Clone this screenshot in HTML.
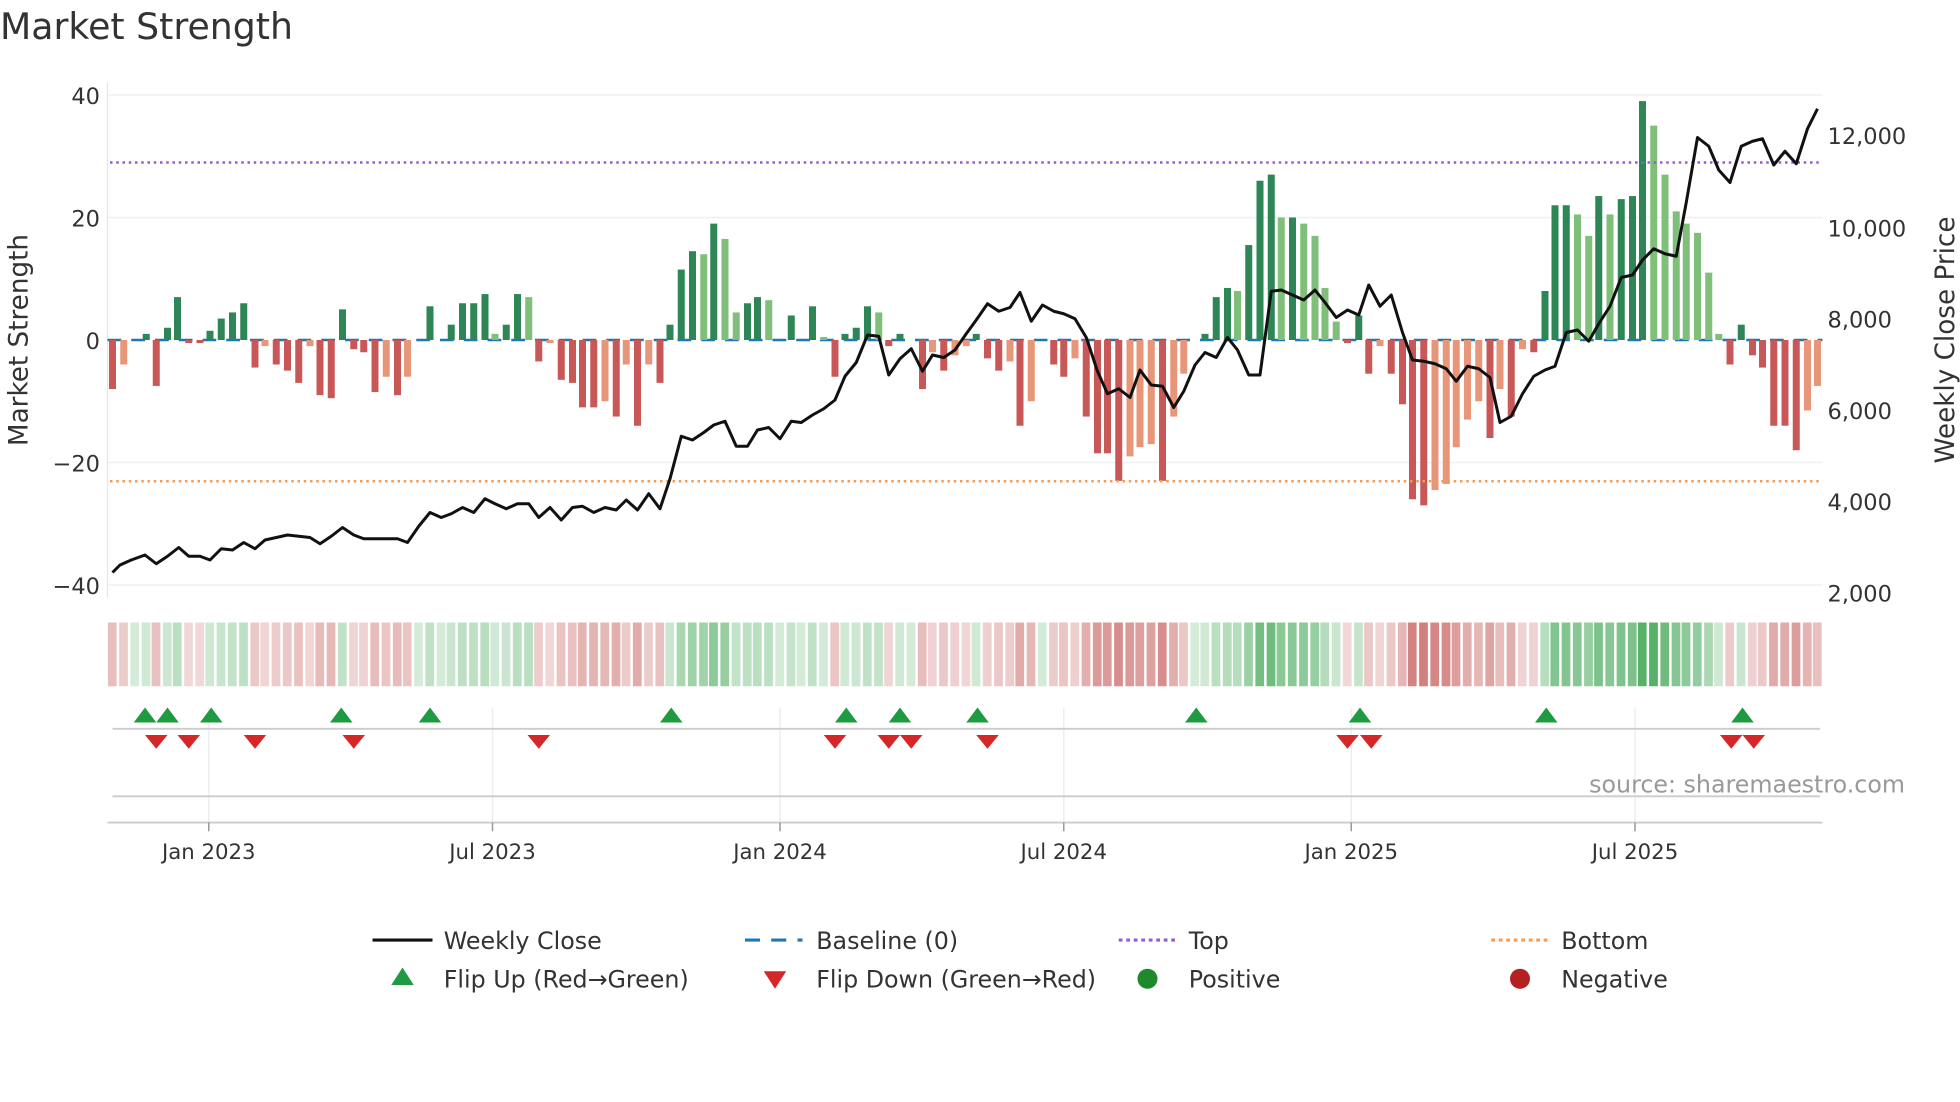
<!DOCTYPE html>
<html><head><meta charset="utf-8">
<style>
html,body{margin:0;padding:0;background:#fff;width:1960px;height:1102px;overflow:hidden}
svg{display:block;font-family:"DejaVu Sans","Liberation Sans",sans-serif}
</style></head><body>
<svg id="c" width="1960" height="1102" viewBox="0 0 1568 881.6" xmlns="http://www.w3.org/2000/svg">
<rect width="1568" height="882" fill="#fff"/>
<text x="0" y="31" font-size="29" fill="#333">Market Strength</text>
<g stroke="#eef0f3" stroke-width="1.2">
<line x1="86" x2="1458" y1="76" y2="76"/><line x1="86" x2="1458" y1="174" y2="174"/>
<line x1="86" x2="1458" y1="370" y2="370"/><line x1="86" x2="1458" y1="468" y2="468"/>
</g>
<line x1="86" x2="86" y1="66" y2="478" stroke="#e4e6ea"/>
<g font-size="18" fill="#333" text-anchor="end">
<text x="80" y="83">40</text><text x="80" y="181">20</text><text x="80" y="279">0</text>
<text x="80" y="377">−20</text><text x="80" y="475">−40</text>
</g>
<g font-size="18" fill="#333">
<text x="1462" y="115">12,000</text><text x="1462" y="189">10,000</text><text x="1462" y="262">8,000</text>
<text x="1462" y="335">6,000</text><text x="1462" y="408">4,000</text><text x="1462" y="481">2,000</text>
</g>
<text transform="translate(22,272) rotate(-90)" font-size="21" fill="#333" text-anchor="middle">Market Strength</text>
<text transform="translate(1563,272) rotate(-90)" font-size="21" fill="#333" text-anchor="middle">Weekly Close Price</text>
<line x1="86" x2="1458" y1="272" y2="272" stroke="#1f77b4" stroke-width="2" stroke-dasharray="11 8"/>
<g id="bars"></g>
<line x1="88" x2="1456" y1="130" y2="130" stroke="#9b59d6" stroke-width="2" stroke-dasharray="2 3"/>
<line x1="88" x2="1456" y1="385" y2="385" stroke="#f39c5a" stroke-width="2" stroke-dasharray="2 3"/>
<polyline id="price" fill="none" stroke="#111" stroke-width="2.4" stroke-linejoin="round"/>
<g id="strip"></g>
<g stroke="#eceef1" stroke-width="1.2">
<line x1="167" x2="167" y1="566" y2="658"/><line x1="394" x2="394" y1="566" y2="658"/>
<line x1="624" x2="624" y1="566" y2="658"/><line x1="851" x2="851" y1="566" y2="658"/>
<line x1="1081" x2="1081" y1="566" y2="658"/><line x1="1308" x2="1308" y1="566" y2="658"/>
</g>
<line x1="90" x2="1456" y1="583" y2="583" stroke="#ccc" stroke-width="1.5"/>
<line x1="90" x2="1456" y1="637" y2="637" stroke="#ccc" stroke-width="1.5"/>
<line x1="86" x2="1458" y1="658" y2="658" stroke="#ccc" stroke-width="1.5"/>
<g stroke="#999" stroke-width="1.2">
<line x1="167" x2="167" y1="658" y2="665"/><line x1="394" x2="394" y1="658" y2="665"/>
<line x1="624" x2="624" y1="658" y2="665"/><line x1="851" x2="851" y1="658" y2="665"/>
<line x1="1081" x2="1081" y1="658" y2="665"/><line x1="1308" x2="1308" y1="658" y2="665"/>
</g>
<g id="mk"></g>
<text x="1524" y="634" font-size="19" fill="#999" text-anchor="end">source: sharemaestro.com</text>
<g font-size="17" fill="#333" text-anchor="middle">
<text x="167" y="687">Jan 2023</text><text x="394" y="687">Jul 2023</text><text x="624" y="687">Jan 2024</text>
<text x="851" y="687">Jul 2024</text><text x="1081" y="687">Jan 2025</text><text x="1308" y="687">Jul 2025</text>
</g>
<g font-size="19" fill="#333">
<line x1="298" x2="346" y1="752" y2="752" stroke="#111" stroke-width="2.5"/>
<text x="355" y="759">Weekly Close</text>
<line x1="596" x2="642" y1="752" y2="752" stroke="#1f77b4" stroke-width="2.5" stroke-dasharray="12 9"/>
<text x="653" y="759">Baseline (0)</text>
<line x1="895" x2="940" y1="752" y2="752" stroke="#9b59d6" stroke-width="2.5" stroke-dasharray="3 3"/>
<text x="951" y="759">Top</text>
<line x1="1193" x2="1238" y1="752" y2="752" stroke="#f39c5a" stroke-width="2.5" stroke-dasharray="3 3"/>
<text x="1249" y="759">Bottom</text>
<polygon points="313,788 331,788 322,774" fill="#1e9a40"/>
<text x="355" y="790">Flip Up (Red→Green)</text>
<polygon points="611,777 629,777 620,791" fill="#d62728"/>
<text x="653" y="790">Flip Down (Green→Red)</text>
<circle cx="918" cy="783" r="8" fill="#1e8a2a"/>
<text x="951" y="790">Positive</text>
<circle cx="1216" cy="783" r="8" fill="#b22222"/>
<text x="1249" y="790">Negative</text>
</g>
</svg>
<script>
var NS="http://www.w3.org/2000/svg";
function el(t,a,p){var e=document.createElementNS(NS,t);for(var k in a)e.setAttribute(k,a[k]);p.appendChild(e);return e;}
var B=[[90,-8],[99,-4],[108,0],[117,1],[125,-7.5],[134,2],[142,7],[151,-0.5],[160,-0.5],[168,1.5],[177,3.5],[186,4.5],[195,6],[204,-4.5],[212,-1],[221,-4],[230,-5],[239,-7],[248,-1],[256,-9],[265,-9.5],[274,5],[283,-1.5],[291,-2],[300,-8.5],[309,-6],[318,-9],[326,-6],[335,0],[344,5.5],[353,0],[361,2.5],[370,6],[379,6],[388,7.5],[396,1],[405,2.5],[414,7.5],[423,7],[431,-3.5],[440,-0.5],[449,-6.5],[458,-7],[466,-11],[475,-11],[484,-10],[493,-12.5],[501,-4],[510,-14],[519,-4],[528,-7],[536,2.5],[545,11.5],[554,14.5],[563,14],[571,19],[580,16.5],[589,4.5],[598,6],[606,7],[615,6.5],[624,0],[633,4],[641,0],[650,5.5],[659,0.5],[668,-6],[676,1],[685,2],[694,5.5],[703,4.5],[711,-1],[720,1],[729,0],[738,-8],[746,-2],[755,-5],[764,-2.5],[773,-1],[781,1],[790,-3],[799,-5],[808,-3.5],[816,-14],[825,-10],[834,0],[843,-4],[851,-6],[860,-3],[869,-12.5],[878,-18.5],[886,-18.5],[895,-23],[904,-19],[912,-17.5],[921,-17],[930,-23],[939,-12.5],[947,-5.5],[956,0],[964,1],[973,7],[982,8.5],[990,8],[999,15.5],[1008,26],[1017,27],[1025,20],[1034,20],[1043,19],[1052,17],[1060,8.5],[1069,3],[1078,-0.5],[1087,4],[1095,-5.5],[1104,-1],[1113,-5.5],[1122,-10.5],[1130,-26],[1139,-27],[1148,-24.5],[1157,-23.5],[1165,-17.5],[1174,-13],[1183,-10],[1192,-16],[1200,-8],[1209,-12.5],[1218,-1.5],[1227,-2],[1236,8],[1244,22],[1253,22],[1262,20.5],[1271,17],[1279,23.5],[1288,20.5],[1297,23],[1306,23.5],[1314,39],[1323,35],[1332,27],[1341,21],[1349,19],[1358,17.5],[1367,11],[1375,1],[1384,-4],[1393,2.5],[1402,-2.5],[1410,-4.5],[1419,-14],[1428,-14],[1437,-18],[1446,-11.5],[1454,-7.5]];
var bars=document.getElementById("bars"),strip=document.getElementById("strip");
var prev=0;
B.forEach(function(b,i){var x=b[0],v=b[1],c;
 if(v>=0)c=(v>=prev?"#2e8555":"#7fbf7a");else c=(v<=prev?"#c85858":"#e8967a");
 var h=Math.abs(v)*4.9,y=v>=0?272-h:272;
 if(h>0.3)el("rect",{x:x-2.8,y:y,width:5.6,height:h,fill:c},bars);
 var a=Math.min(0.85,0.22+Math.abs(v)/32*0.6);
 el("rect",{x:x-3.7,y:498,width:7,height:51,fill:v>=0?"#3aa34e":"#c0504d","fill-opacity":a},strip);
 prev=v;});
var P=[90,458,96,452,105,448,116,444,125,451,134,445,143,438,151,445,160,445,168,448,177,439,186,440,195,434,204,439,212,432,221,430,230,428,239,429,248,430,256,435,265,429,274,422,283,428,291,431,300,431,309,431,318,431,326,434,335,421,344,410,353,414,361,411,370,406,379,410,388,399,396,403,405,407,414,403,423,403,431,414,440,406,449,416,458,406,466,405,475,410,484,406,493,408,501,400,510,408,519,395,528,407,536,383,545,349,554,352,563,346,571,340,580,337,589,357,598,357,606,344,615,342,624,351,633,337,641,338,650,332,659,327,668,320,676,301,685,290,694,268,703,269,711,300,720,287,729,279,738,297,746,284,755,286,764,280,773,267,781,256,790,243,799,249,808,246,816,234,825,257,834,244,843,249,851,251,860,255,869,270,878,297,886,315,895,311,904,318,912,296,921,308,930,309,939,326,947,313,956,292,964,282,973,286,982,270,990,280,999,300,1008,300,1017,233,1025,232,1034,236,1043,240,1052,232,1060,242,1069,254,1078,248,1087,252,1095,228,1104,245,1113,236,1122,266,1130,288,1139,289,1148,291,1157,295,1165,305,1174,293,1183,295,1192,302,1200,338,1209,333,1218,315,1227,301,1236,296,1244,293,1253,266,1262,264,1271,273,1279,259,1288,245,1297,222,1306,220,1314,208,1323,199,1332,203,1341,205,1349,162,1358,110,1367,117,1375,136,1384,146,1393,117,1402,113,1410,111,1419,132,1428,121,1437,131,1446,103,1454,87];
var s=[];for(var i=0;i<P.length;i+=2)s.push(P[i]+","+P[i+1]);
document.getElementById("price").setAttribute("points",s.join(" "));
var mk=document.getElementById("mk");
[116,134,169,273,344,537,677,720,782,957,1088,1237,1394].forEach(function(x){el("polygon",{points:(x-9)+",578 "+(x+9)+",578 "+x+",566",fill:"#1e9a40"},mk);});
[125,151,204,283,431,668,711,729,790,1078,1097,1385,1403].forEach(function(x){el("polygon",{points:(x-9)+",588 "+(x+9)+",588 "+x+",599",fill:"#d62728"},mk);});
</script>
</body></html>
